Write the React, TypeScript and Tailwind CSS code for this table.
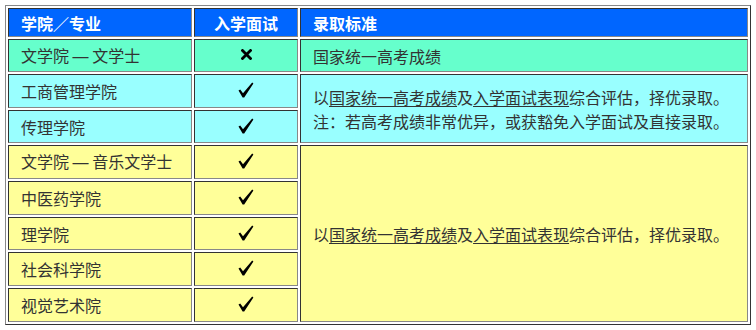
import React from 'react';

const cell =
  'border border-t-[#333333] border-l-[#333333] border-r-[#888888] border-b-[#888888] p-0';

const Check: React.FC = () => (
  <svg width="16" height="16" viewBox="0 0 16 16" className="block mx-auto -mt-[2px]">
    <path d="M0.5 8.5 L2.2 7.4 L5 11.2 L14.2 0.6 L15.4 1.4 L6.2 15.4 L4.6 15.4 Z" fill="#000" />
  </svg>
);

const Cross: React.FC = () => (
  <svg width="11" height="11" viewBox="0 0 11 11" className="block mx-auto -mt-[2px]">
    <path d="M1.5 1.5 L9.5 9.5 M9.5 1.5 L1.5 9.5" stroke="#000" strokeWidth="2.8" strokeLinecap="square" />
  </svg>
);

const Dash: React.FC = () => <span className="font-['Liberation_Sans',sans-serif]">—</span>;

const rows: { name: React.ReactNode; key: string; bg: string; h: string; ok: boolean }[] = [
  { key: 'a', name: <>文学院 <Dash /> 文学士</>, bg: 'bg-[#66ffcc]', h: 'h-[33px]', ok: false },
  { key: 'b', name: '工商管理学院', bg: 'bg-[#99ffff]', h: 'h-[34px]', ok: true },
  { key: 'c', name: '传理学院', bg: 'bg-[#99ffff]', h: 'h-[33px]', ok: true },
  { key: 'd', name: <>文学院 <Dash /> 音乐文学士</>, bg: 'bg-[#ffff99]', h: 'h-[34px]', ok: true },
  { key: 'e', name: '中医药学院', bg: 'bg-[#ffff99]', h: 'h-[34px]', ok: true },
  { key: 'f', name: '理学院', bg: 'bg-[#ffff99]', h: 'h-[33px]', ok: true },
  { key: 'g', name: '社会科学院', bg: 'bg-[#ffff99]', h: 'h-[34px]', ok: true },
  { key: 'h', name: '视觉艺术院', bg: 'bg-[#ffff99]', h: 'h-[34px]', ok: true },
];

const Mixed: React.FC = () => (
  <>
    以<span className="underline underline-offset-2">国家统一高考成绩</span>及
    <span className="underline underline-offset-2">入学面试表现</span>综合评估，择优录取。
  </>
);

const App: React.FC = () => {
  return (
    <div className="w-[756px] h-[330px] bg-white p-[5px] font-['Noto_Sans_CJK_SC','Noto_Sans',sans-serif] text-[16px] text-[#333333]">
      <table className="table-fixed w-[746px] border-separate border-spacing-[2px] border border-t-[#888888] border-l-[#888888] border-r-[#333333] border-b-[#333333]">
        <thead>
          <tr className="h-[29px]">
            <th className={`${cell} w-[184px] bg-[#0066ff] text-white font-bold text-left pl-[12px] leading-none`}>学院／专业</th>
            <th className={`${cell} w-[104px] bg-[#0066ff] text-white font-bold text-center leading-none`}>入学面试</th>
            <th className={`${cell} bg-[#0066ff] text-white font-bold text-left pl-[12px] leading-none`}>录取标准</th>
          </tr>
        </thead>
        <tbody>
          {rows.map((r, i) => (
            <tr key={r.key} className={r.h}>
              <td className={`${cell} ${r.bg} pl-[12px] leading-none`}>{r.name}</td>
              <td className={`${cell} ${r.bg} leading-none`}>{r.ok ? <Check /> : <Cross />}</td>
              {i === 0 && (
                <td className={`${cell} ${r.bg} pl-[12px] leading-none`}>国家统一高考成绩</td>
              )}
              {i === 1 && (
                <td rowSpan={2} className={`${cell} ${r.bg} pl-[12px] leading-[24px]`}>
                  <div><Mixed /></div>
                  <div>注：若高考成绩非常优异，或获豁免入学面试及直接录取。</div>
                </td>
              )}
              {i === 3 && (
                <td rowSpan={5} className={`${cell} ${r.bg} pl-[12px] leading-[24px]`}>
                  <Mixed />
                </td>
              )}
            </tr>
          ))}
        </tbody>
      </table>
    </div>
  );
};

export default App;
